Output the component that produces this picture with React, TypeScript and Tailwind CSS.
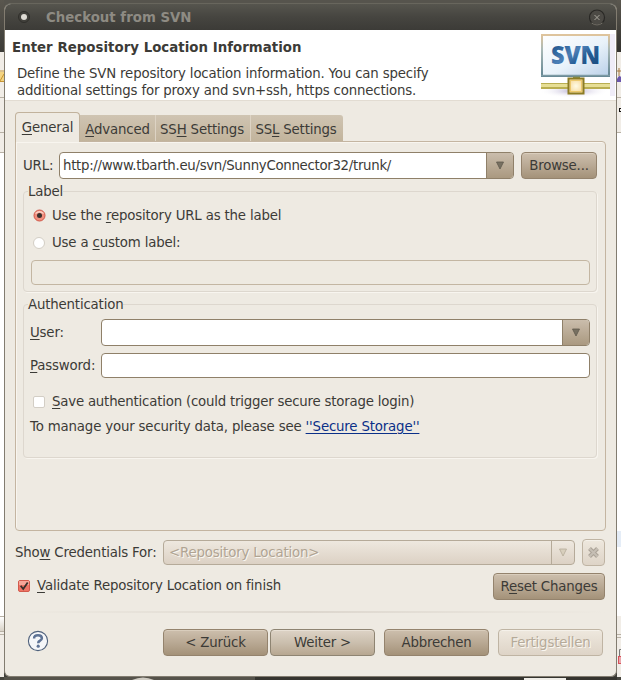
import type { ReactNode } from "react";

function U({ children }: { children: ReactNode }) {
  return <span className="underline decoration-1 underline-offset-2">{children}</span>;
}

function Arrow({ faded = false }: { faded?: boolean }) {
  return (
    <svg width="8" height="9" viewBox="0 0 8 9">
      <path d="M0.5 1H7.5L4 8Z" fill={faded ? "#d8cfbd" : "#777061"} stroke={faded ? "#b5ab99" : "#5f594c"} strokeWidth="0.8" />
    </svg>
  );
}

function Button({ children, className, tone = "dark" }: { children: ReactNode; className: string; tone?: "dark" | "light" | "off" }) {
  const tones = {
    dark: "border-[#94836d] bg-linear-to-b from-[#cdbfad] via-[#b9a994] to-[#a49279] text-[#3c3b37] shadow-[inset_0_1px_0_#d9cdbc]",
    light: "border-[#8e8472] bg-linear-to-b from-[#ddd3c6] via-[#cbbfae] to-[#b7a791] text-[#3c3b37] shadow-[inset_0_1px_0_#e8e0d5]",
    off: "border-[#bfb4a3] bg-linear-to-b from-[#eee8de] to-[#ded4c7] text-[#b5aa99] [text-shadow:1px_1px_0_#faf7f1] shadow-[inset_0_1px_0_#f5f1ea]",
  };
  return (
    <button className={`flex h-[27px] shrink-0 items-center justify-center rounded-[4px] border tracking-[-0.2px] ${tones[tone]} ${className}`}>
      {children}
    </button>
  );
}

function SvnLogo() {
  return (
    <svg width="76" height="66" viewBox="0 0 76 66" className="block">
      <defs>
        <linearGradient id="screen" x1="0" y1="0" x2="1" y2="1">
          <stop offset="0" stopColor="#ffffff" />
          <stop offset="0.55" stopColor="#e9f2fa" />
          <stop offset="1" stopColor="#bad0e8" />
        </linearGradient>
        <linearGradient id="frame" x1="0" y1="0" x2="0" y2="1">
          <stop offset="0" stopColor="#dfc49c" />
          <stop offset="0.35" stopColor="#aab9b7" />
          <stop offset="1" stopColor="#648693" />
        </linearGradient>
        <linearGradient id="ink" x1="0" y1="0" x2="1" y2="1">
          <stop offset="0" stopColor="#0d437b" />
          <stop offset="0.45" stopColor="#4c7fb6" />
          <stop offset="0.65" stopColor="#245b93" />
          <stop offset="1" stopColor="#164879" />
        </linearGradient>
        <radialGradient id="shade">
          <stop offset="0" stopColor="#b5acd0" />
          <stop offset="1" stopColor="#ffffff" stopOpacity="0" />
        </radialGradient>
        <radialGradient id="node">
          <stop offset="0" stopColor="#fffbe6" />
          <stop offset="1" stopColor="#f7dca0" />
        </radialGradient>
      </defs>
      <rect x="70" y="2" width="5" height="62" fill="#f0edf8" />
      <ellipse cx="34" cy="59" rx="35" ry="7" fill="url(#shade)" />
      <rect x="2" y="3" width="67" height="41" fill="url(#screen)" stroke="url(#frame)" strokeWidth="2" />
      <path d="M1 43.5H70" stroke="#7d9aa4" strokeWidth="1.5" />
      <text x="11" y="31.5" textLength="49" lengthAdjust="spacingAndGlyphs" fontFamily="Open Sans" fontWeight="800" fontSize="24" fill="url(#ink)">SVN</text>
      <path d="M33 44.5H40V47H33Z" fill="#80905a" />
      <rect x="1" y="51" width="69" height="6" fill="#b9ae51" />
      <rect x="1" y="52" width="69" height="3" fill="#e6de95" />
      <rect x="28.5" y="46.5" width="15" height="15" fill="url(#node)" stroke="#8c7c24" strokeWidth="2" />
      <rect x="30.5" y="48.5" width="11" height="11" fill="none" stroke="#ecc96c" />
    </svg>
  );
}

export default function App() {
  return (
    <div className="relative flex h-[680px] w-[621px] overflow-hidden bg-[#46453f] text-[13.333px] leading-[17px] tracking-[-0.17px] whitespace-nowrap text-[#3c3b37] [font-family:'DejaVu_Sans',sans-serif]">
      {/* Slice of the editor left of the dialog */}
      <div className="flex h-[677px] w-1 shrink-0 flex-col bg-[#f1ede7]">
        <div className="h-[52px] shrink-0 bg-linear-to-b from-[#5a574f] to-[#3c3b37]" />
        <svg width="4" height="101" className="block shrink-0">
          <path d="M0 20H4V29H0Z" fill="#f4d482" /><path d="M0 29L4 22M0 19H4M0 29.5H4" stroke="#c69432" fill="none" />
          <path d="M0 45.5H4M0 80.5H4M0 100.5H4" stroke="#b8b1a5" />
        </svg>
        <div className="h-[463px] shrink-0 bg-white" />
        <div className="h-[16px] shrink-0 border-y border-[#b8b1a5] bg-linear-to-b from-white to-[#d9d3c8]" />
        <div className="h-[3px] shrink-0 border-b border-[#b8b1a5]" />
      </div>

      <div className="flex w-[613px] shrink-0 flex-col bg-linear-to-b from-[#56544d] to-[#403f3a] pt-[3px]">
        <div className="flex h-[674px] shrink-0 flex-col overflow-hidden rounded-t-[7px] rounded-b-[6px] border border-[#827c70] border-t-[#68665d] bg-[#eeeae2]">
          {/* Title bar */}
          <div className="flex h-[26px] shrink-0 items-center bg-linear-to-b from-[#56554e] via-[#464540] to-[#3c3b37] pl-[13px] pr-[10px]">
            <div className="flex size-3 items-center justify-center rounded-full border border-[#302f2b] bg-[#42413c]">
              <div className="size-[6px] rounded-full bg-[#dedbd4]" />
            </div>
            <div className="ml-4 flex-1 font-bold tracking-normal text-[#8e8b83]">Checkout from SVN</div>
            <svg width="17" height="17" viewBox="0 0 17 17">
              <circle cx="8" cy="8.5" r="7.5" fill="#4c4a45" stroke="#292825" strokeWidth="1.2" />
              <path d="M2.5 14Q8 18 13.5 14" fill="none" stroke="#77736b" />
              <path d="M5.5 6L10.5 11M10.5 6L5.5 11" stroke="#aaa79e" strokeWidth="1" />
            </svg>
          </div>

          {/* Wizard banner */}
          <div className="flex h-[71px] shrink-0 border-b border-[#e2dcd2] bg-white">
            <div className="flex-1 pl-[7px] pt-[9px]">
              <div className="font-bold tracking-[0.03px]">Enter Repository Location Information</div>
              <div className="mt-[9px] pl-[5px]">Define the SVN repository location information. You can specify<br />additional settings for proxy and svn+ssh, https connections.</div>
            </div>
            <div className="pt-[2px]"><SvnLogo /></div>
          </div>

          <div className="flex flex-1 flex-col pl-[10px] pr-[10px] pt-[11px]">
            {/* Tab strip */}
            <div className="flex h-[29px] shrink-0 items-end">
              <div className="z-10 -mb-px flex h-[30px] w-[65px] justify-center rounded-t-[4px] border border-b-0 border-[#c1b29c] bg-[#eeeae2] pt-[6px]"><span><U>G</U>eneral</span></div>
              <div className="flex h-[26px] w-[76px] items-center justify-center border-r border-[#ddd3c4] bg-linear-to-b from-[#cfc4b2] to-[#c2b49c] pt-[2px]"><span><U>A</U>dvanced</span></div>
              <div className="flex h-[26px] w-[95px] items-center justify-center border-r border-[#ddd3c4] bg-linear-to-b from-[#cfc4b2] to-[#c2b49c] pt-[2px] pr-[2px]"><span>SS<U>H</U> Settings</span></div>
              <div className="flex h-[26px] w-[92px] items-center justify-center rounded-tr-[3px] bg-linear-to-b from-[#cfc4b2] to-[#c2b49c] pt-[2px] pr-[2px]"><span>SS<U>L</U> Settings</span></div>
            </div>

            <div className="flex h-[390px] shrink-0 flex-col rounded-[4px] rounded-tl-none border border-[#c4b5a1] pl-[7px] pr-2 pt-[10px] shadow-[inset_1px_1px_0_#f8f5ef]">
              <div className="flex h-[27px] shrink-0 items-center">
                <span className="w-9">URL:</span>
                <div className="flex h-[27px] w-[455px] overflow-hidden rounded-[4px] border border-[#8f8069] bg-white">
                  <div className="flex-1 pl-[3px] pt-[4px] tracking-[-0.3px]">http://www.tbarth.eu/svn/SunnyConnector32/trunk/</div>
                  <div className="flex w-[27px] items-center justify-center border-l border-[#8f8069] bg-linear-to-b from-[#cabdac] to-[#aa9980]"><Arrow /></div>
                </div>
                <Button className="ml-[7px] w-[76px]">Browse...</Button>
              </div>

              <fieldset className="mt-[4px] h-[109px] shrink-0 rounded-[4px] border border-[#ddd7ce] px-[6px] shadow-[1px_1px_0_#f8f5ef]">
                <legend className="-ml-[2px] h-[17px]">Label</legend>
                <div className="mt-[7px] flex h-[17px] items-center pl-[3px]">
                  <svg width="13" height="13" viewBox="0 0 13 13">
                    <circle cx="6.5" cy="6.5" r="5.5" fill="#f18e7d" stroke="#cf5749" />
                    <path d="M2.5 4.5Q6.5 1 10.5 4.5" fill="none" stroke="#fbd0c4" strokeWidth="1.3" />
                    <circle cx="6.5" cy="6.5" r="2.5" fill="#38312e" />
                  </svg>
                  <span className="ml-[6px]">Use the <U>r</U>epository URL as the label</span>
                </div>
                <div className="mt-[10px] flex h-[17px] items-center pl-[3px]">
                  <div className="size-3 rounded-full border border-[#d3cec5] bg-white" />
                  <span className="ml-[7px]">Use a <U>c</U>ustom label:</span>
                </div>
                <div className="ml-px mt-[9px] h-[25px] rounded-[4px] border border-[#c3b6a2] bg-[#eeeae1]" />
              </fieldset>

              <fieldset className="mt-[4px] h-[162px] shrink-0 rounded-[4px] border border-[#ddd7ce] px-[6px] shadow-[1px_1px_0_#f8f5ef]">
                <legend className="-ml-[2px] h-[17px]">Authentication</legend>
                <div className="mt-[6px] flex h-[27px] items-center">
                  <span className="w-[71px]"><U>U</U>ser:</span>
                  <div className="flex h-[27px] flex-1 overflow-hidden rounded-[4px] border border-[#8f8069] bg-white">
                    <div className="flex-1" />
                    <div className="flex w-[27px] items-center justify-center border-l border-[#8f8069] bg-linear-to-b from-[#cabdac] to-[#aa9980]"><Arrow /></div>
                  </div>
                </div>
                <div className="mt-[7px] flex h-[25px] items-center">
                  <span className="w-[71px]"><U>P</U>assword:</span>
                  <div className="h-[25px] flex-1 rounded-[4px] border border-[#8f8069] bg-white" />
                </div>
                <div className="mt-[15px] flex h-[17px] items-center pl-[3px]">
                  <div className="size-3 rounded-[2px] border border-[#d3cec5] bg-white" />
                  <span className="ml-[7px] tracking-[-0.21px]"><U>S</U>ave authentication (could trigger secure storage login)</span>
                </div>
                <div className="mt-2">To manage your security data, please see <span className="text-[#0b3088] underline decoration-1 underline-offset-2">''Secure Storage''</span></div>
              </fieldset>
            </div>

            <div className="mt-2 flex h-[27px] shrink-0 items-center">
              <span className="w-[148px]">Sho<U>w</U> Credentials For:</span>
              <div className="flex h-[25px] w-[412px] overflow-hidden rounded-[4px] border border-[#b5aa99] bg-linear-to-b from-[#eee8df] to-[#dcd1c4] text-[#b0a493] [text-shadow:1px_1px_0_#faf7f1]">
                <div className="flex-1 pl-[5px] pt-[3px]">&lt;Repository Location&gt;</div>
                <div className="flex w-[23px] items-center justify-center border-l border-[#b5aa99]"><Arrow faded /></div>
              </div>
              <Button tone="off" className="ml-[7px] w-[23px]">
                <svg width="13" height="13" viewBox="0 0 13 13" className="shrink-0"><path d="M2.5 2.5L10.5 10.5M10.5 2.5L2.5 10.5" stroke="#aaa297" strokeWidth="4" /><path d="M2.5 2.5L10.5 10.5M10.5 2.5L2.5 10.5" stroke="#c5beb4" strokeWidth="2" /></svg>
              </Button>
            </div>

            <div className="mt-[7px] flex h-[27px] shrink-0 justify-between pr-px">
              <div className="flex h-[25px] items-center pl-[3px]">
                <svg width="12" height="12" viewBox="0 0 12 12">
                  <rect x="0.5" y="0.5" width="11" height="11" rx="1.5" fill="#ef7566" stroke="#d25a4c" />
                  <path d="M1 1H11V5H1Z" fill="#f6a698" />
                  <path d="M2.7 5.8L5.2 9L9.7 2.5" fill="none" stroke="#37302b" strokeWidth="1.8" />
                </svg>
                <span className="ml-[7px]"><U>V</U>alidate Repository Location on finish</span>
              </div>
              <Button className="w-[112px]"><span>R<U>e</U>set Changes</span></Button>
            </div>

            <div className="mt-[11px] h-[2px] shrink-0 bg-linear-to-r from-transparent via-[#ddd7ce] to-transparent" />
            <div className="mt-[16px] flex h-[27px] shrink-0 items-center pl-[12px]">
              <svg width="22" height="22" viewBox="0 0 22 22" className="mr-[114px] mb-[3px] shrink-0">
                <circle cx="11" cy="11" r="9.6" fill="#f5f6f8" stroke="#4f617c" strokeWidth="1.1" />
                <path d="M7.1 8.5Q7 5.2 11 5.2Q14.9 5.2 14.9 8.2Q14.9 9.9 12.6 11Q11.2 11.7 11.2 13.2" fill="none" stroke="#5e7395" strokeWidth="2.5" />
                <circle cx="11.2" cy="16.2" r="1.6" fill="#5e7395" />
              </svg>
              <Button className="w-[105px]">&lt; Zurück</Button>
              <Button tone="light" className="ml-[2px] w-[105px]">Weiter &gt;</Button>
              <Button className="ml-[9px] w-[105px]">Abbrechen</Button>
              <Button tone="off" className="ml-[9px] w-[105px]">Fertigstellen</Button>
            </div>
          </div>
        </div>
        <svg width="613" height="3" className="block"><rect width="613" height="3" fill="#55524a" /><path d="M128 3Q139 -2 150 3Z" fill="#d0ccc3" /><path d="M251 0H613V3H251Z" fill="#35342f" /><path d="M520 1H562V3H520Z" fill="#efede7" /></svg>
      </div>

      {/* Slice of the editor right of the dialog */}
      <div className="flex h-[677px] w-1 shrink-0 flex-col bg-[#f1ede7]">
        <div className="h-[52px] shrink-0 bg-linear-to-b from-[#5a574f] to-[#33322e]" />
        <svg width="4" height="81" className="block shrink-0">
          <path d="M0 19H4M2 16V24" stroke="#a6763e" /><path d="M0 27Q2 22 4 25V30H0Z" fill="#6b56ad" />
          <path d="M0 45.5H4M0 80.5H4" stroke="#b8b1a5" /><rect x="2.5" y="56.5" width="3" height="3" fill="none" stroke="#111" />
        </svg>
        <div className="h-[398px] shrink-0 bg-white" />
        <div className="h-[16px] shrink-0 bg-[#e5edf7]" />
        <div className="h-[69px] shrink-0 bg-white" />
        <svg width="4" height="61" className="block shrink-0">
          <path d="M0 18.5H4M0 21.5H4" stroke="#b8b1a5" /><path d="M2.5 40V33.5H4" stroke="#777" fill="none" /><rect x="1" y="40" width="3" height="8" fill="#d6515b" /><path d="M2 42H4M2 44H4M2 46H4" stroke="#fff" />
        </svg>
      </div>
    </div>
  );
}
